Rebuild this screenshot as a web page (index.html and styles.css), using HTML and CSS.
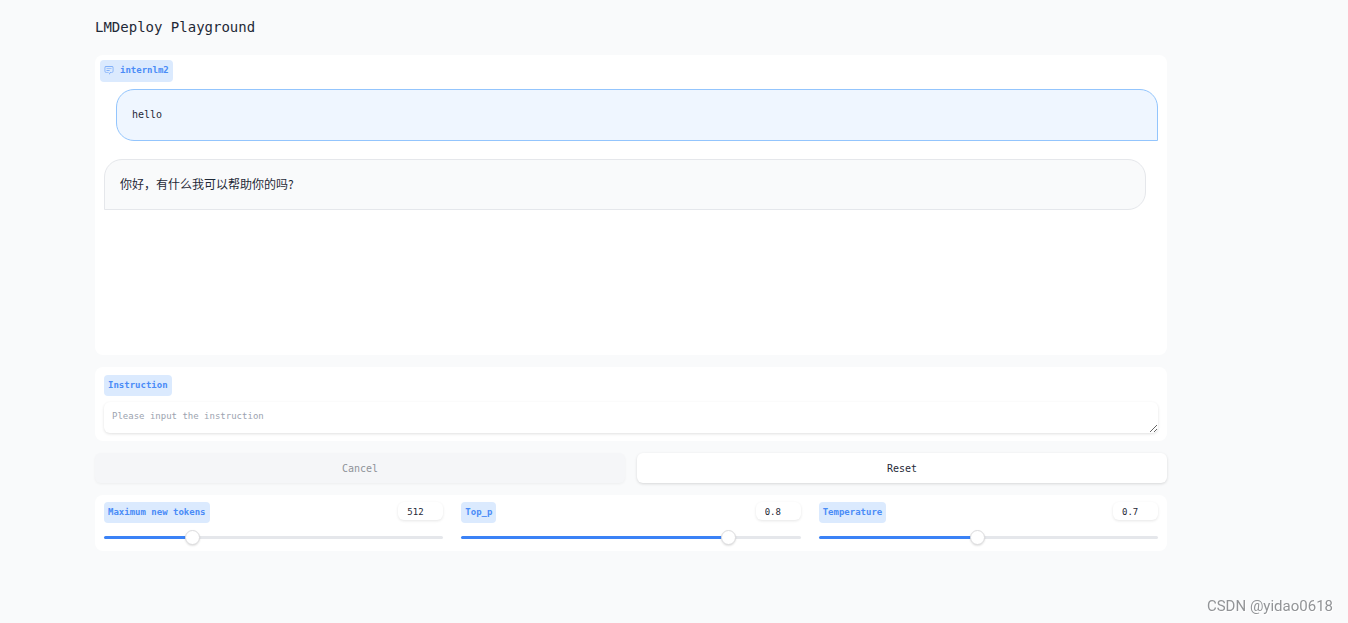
FILE: index.html
```html
<!DOCTYPE html>
<html lang="en">
<head>
<meta charset="utf-8">
<title>LMDeploy Playground</title>
<link rel="stylesheet" href="styles.css">
</head>
<body>
<main class="app">
  <h1 class="title">LMDeploy Playground</h1>
  <section class="panel chat" aria-label="internlm2">
    <div class="tag chat-tag">
      <svg class="chat-icon" viewBox="0 0 32 32" fill="currentColor" aria-hidden="true"><path d="M17.74 30L16 29l4-7h6a2 2 0 0 0 2-2V8a2 2 0 0 0-2-2H6a2 2 0 0 0-2 2v12a2 2 0 0 0 2 2h9v2H6a4 4 0 0 1-4-4V8a4 4 0 0 1 4-4h20a4 4 0 0 1 4 4v12a4 4 0 0 1-4 4h-4.84z"/><path d="M8 10h16v2H8zM8 16h10v2H8z"/></svg>
      <span>internlm2</span>
    </div>
    <div class="messages">
      <p class="bubble user">hello</p>
      <p class="bubble bot" lang="zh-CN">你好，有什么我可以帮助你的吗?</p>
    </div>
  </section>
  <section class="panel prompt">
    <label class="tag" for="instruction">Instruction</label>
    <textarea class="prompt-input" id="instruction" rows="1" placeholder="Please input the instruction"></textarea>
  </section>
  <div class="actions">
    <button class="button" type="button" disabled>Cancel</button>
    <button class="button" type="button">Reset</button>
  </div>
  <section class="panel settings">
    <div class="setting">
      <div class="setting-head">
        <label class="tag" for="tokens">Maximum new tokens</label>
        <input class="number" type="text" inputmode="numeric" value="512" aria-label="Maximum new tokens value">
      </div>
      <input class="slider" id="tokens" type="range" min="1" max="2048" value="512" style="--fill: 26%">
    </div>
    <div class="setting">
      <div class="setting-head">
        <label class="tag" for="top-p">Top_p</label>
        <input class="number" type="text" inputmode="decimal" value="0.8" aria-label="Top_p value">
      </div>
      <input class="slider" id="top-p" type="range" min="0" max="1" step="0.01" value="0.8" style="--fill: 79%">
    </div>
    <div class="setting">
      <div class="setting-head">
        <label class="tag" for="temperature">Temperature</label>
        <input class="number" type="text" inputmode="decimal" value="0.7" aria-label="Temperature value">
      </div>
      <input class="slider" id="temperature" type="range" min="0" max="1.5" step="0.01" value="0.7" style="--fill: 47%">
    </div>
  </section>
</main>
<div class="watermark">CSDN @yidao0618</div>
</body>
</html>
```
FILE: styles.css
```css
* { box-sizing: border-box; }

body {
  margin: 0;
  min-height: 100vh;
  background: #f9fafb;
  color: #1f2937;
  font: 10px/16px "DejaVu Sans Mono", "Liberation Mono", "Noto Sans CJK SC", monospace;
}

.app {
  display: flex;
  flex-direction: column;
  gap: 12px;
  padding: 15px 181px 0 95px;
}

.title {
  margin: 0 0 4px;
  font-size: 14px;
  font-weight: 400;
  line-height: 24px;
}

.panel {
  background: #fff;
  border-radius: 8px;
}

.tag {
  display: flex;
  align-items: center;
  align-self: flex-start;
  width: fit-content;
  height: 21px;
  padding: 0 4px 2px;
  border-radius: 4px;
  background: #dbeafe;
  color: #4a8cf7;
  font-size: 9px;
  font-weight: 700;
}

.chat {
  min-height: 300px;
  padding: 5px 9px;
}

.chat-tag {
  gap: 6px;
  height: 22px;
  margin-left: -4px;
}

.chat-icon {
  width: 10px;
  height: 10px;
  opacity: 0.8;
}

.messages {
  display: flex;
  flex-direction: column;
  gap: 18px;
  padding-top: 7px;
}

.bubble {
  margin: 0;
  padding: 17px 15px;
  border: 1px solid #e5e7eb;
  border-radius: 18px;
  background: #f9fafb;
}

.user {
  margin-left: 12px;
  border-color: #93c5fd;
  border-bottom-right-radius: 0;
  background: #eff6ff;
}

.bot {
  margin-right: 12px;
  padding: 16px 15px 17px;
  border-bottom-left-radius: 0;
  font-family: "Noto Sans CJK SC", sans-serif;
  font-size: 12px;
}

.prompt {
  display: flex;
  flex-direction: column;
  gap: 6px;
  padding: 8px 9px;
}

.prompt-input {
  display: block;
  width: 100%;
  height: 31px;
  padding: 6px 8px 8px;
  border: 0;
  border-radius: 6px;
  background: #fff;
  box-shadow: 0 1px 3px #0000001f;
  color: inherit;
  font: inherit;
  font-size: 9px;
  resize: vertical;
}

.prompt-input::placeholder { color: #9ca3af; }

.actions {
  display: grid;
  grid-template-columns: 1fr 1fr;
  gap: 12px;
}

.button {
  height: 30px;
  padding: 2px 12px 0;
  border: 0;
  border-radius: 6px;
  background: #fff;
  box-shadow: 0 1px 3px #00000024;
  color: #1f2937;
  font: inherit;
}

.button:disabled {
  background: #f5f6f8;
  box-shadow: 0 1px 3px #0000000d;
  color: #8f9399;
}

.settings {
  display: grid;
  grid-template-columns: repeat(3, 1fr);
  gap: 18px;
  padding: 7px 9px 6px;
}

.setting-head {
  display: flex;
  justify-content: space-between;
}

.number {
  width: 45px;
  height: 18px;
  padding: 2px 9px 0;
  border: 0;
  border-radius: 6px;
  background: #fff;
  box-shadow: 0 1px 3px #0000001a;
  color: inherit;
  font: inherit;
  font-size: 9px;
}

.slider {
  display: block;
  width: 100%;
  height: 15px;
  margin: 7px 0 0;
  background: none;
  appearance: none;
}

.slider::-webkit-slider-runnable-track {
  height: 3px;
  border-radius: 2px;
  background: linear-gradient(to right, #3b82f6 var(--fill), #e5e7eb var(--fill));
}

.slider::-webkit-slider-thumb {
  width: 15px;
  height: 15px;
  margin-top: -6px;
  border: 1px solid #dcdcde;
  border-radius: 50%;
  background: #fff;
  box-shadow: 0 1px 2px #0000001f;
  appearance: none;
}

.watermark {
  position: fixed;
  right: 15px;
  bottom: 7px;
  color: #929497;
  font: 15px/20px Roboto, "Liberation Sans", sans-serif;
  text-shadow: 1px 1px 0 #fff;
}
```
